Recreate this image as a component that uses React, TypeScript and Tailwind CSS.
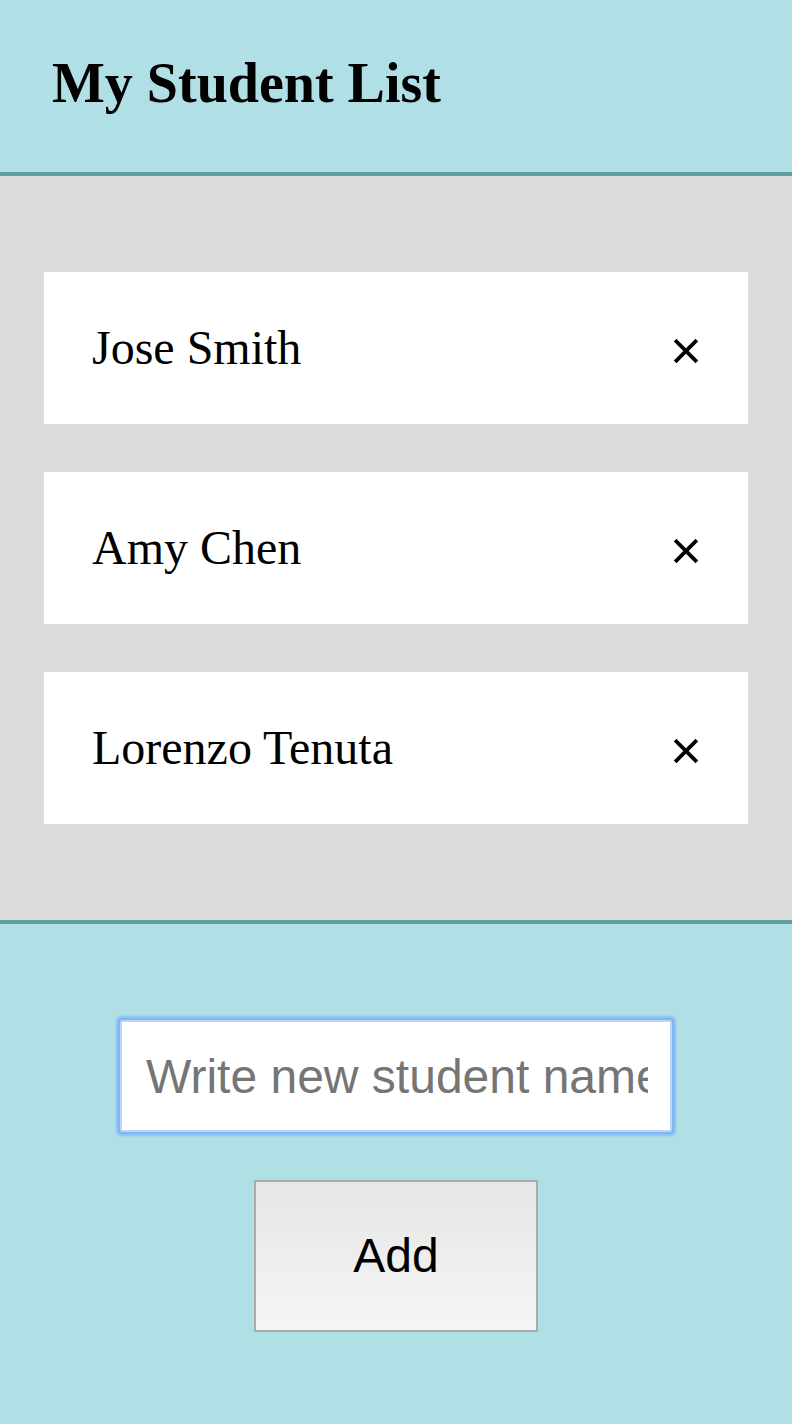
import { useState } from 'react'

type Student = { id: number; name: string }

const initialStudents: Student[] = [
  { id: 1, name: 'Jose Smith' },
  { id: 2, name: 'Amy Chen' },
  { id: 3, name: 'Lorenzo Tenuta' },
]

function CloseIcon() {
  return (
    <svg viewBox="0 0 26 26" className="w-[26px] h-[26px]" fill="none" stroke="black" strokeWidth="3.8" strokeLinecap="square">
      <line x1="3.5" y1="3.5" x2="22.5" y2="22.5" />
      <line x1="22.5" y1="3.5" x2="3.5" y2="22.5" />
    </svg>
  )
}

export default function App() {
  const [students, setStudents] = useState<Student[]>(initialStudents)
  const [name, setName] = useState('')

  const addStudent = () => {
    if (!name.trim()) return
    setStudents((prev) => [...prev, { id: Date.now(), name: name.trim() }])
    setName('')
  }

  return (
    <div className="min-h-screen flex flex-col bg-[#b0dfe5]">
      {/* Header */}
      <header className="h-[176px] border-b-4 border-[#5f9ea0] bg-[#b0dfe5] pl-[52px] pt-[52px]">
        <h1 className="text-[56px] leading-[62px] font-bold text-black [font-family:'Liberation_Serif',serif]">
          My Student List
        </h1>
      </header>

      {/* Student list */}
      <section className="bg-[#dcdcdc] border-b-4 border-[#5f9ea0] px-[44px] py-[96px] flex flex-col gap-[48px]">
        {students.map((s) => (
          <div key={s.id} className="h-[152px] bg-white flex items-center justify-between pl-[48px] pr-[49px]">
            <span className="text-[48px] text-black [font-family:'Liberation_Serif',serif]">{s.name}</span>
            <button
              onClick={() => setStudents((prev) => prev.filter((p) => p.id !== s.id))}
              className="mt-[6px]"
            >
              <CloseIcon />
            </button>
          </div>
        ))}
      </section>

      {/* Add form */}
      <div className="flex-1 flex flex-col items-center pt-[96px] pb-[92px] bg-[#b0dfe5]">
        <input
          autoFocus
          value={name}
          onChange={(e) => setName(e.target.value)}
          placeholder="Write new student name"
          className="w-[552px] h-[112px] bg-white border-2 border-[#b9d7f8] rounded-[2px] pl-[24px] pr-[22px] text-[48px] text-black placeholder-[#757575] outline-none shadow-[0_0_0_2px_#7fb7f5,0_0_2px_4px_#8cc0f4] [font-family:'Liberation_Sans',Arial,sans-serif]"
        />
        <button
          onClick={addStudent}
          className="mt-[48px] w-[284px] h-[152px] border-2 border-[#ababab] bg-gradient-to-b from-[#e6e6e6] to-[#f5f5f5] text-[48px] text-black [font-family:'Liberation_Sans',Arial,sans-serif]"
        >
          Add
        </button>
      </div>
    </div>
  )
}
